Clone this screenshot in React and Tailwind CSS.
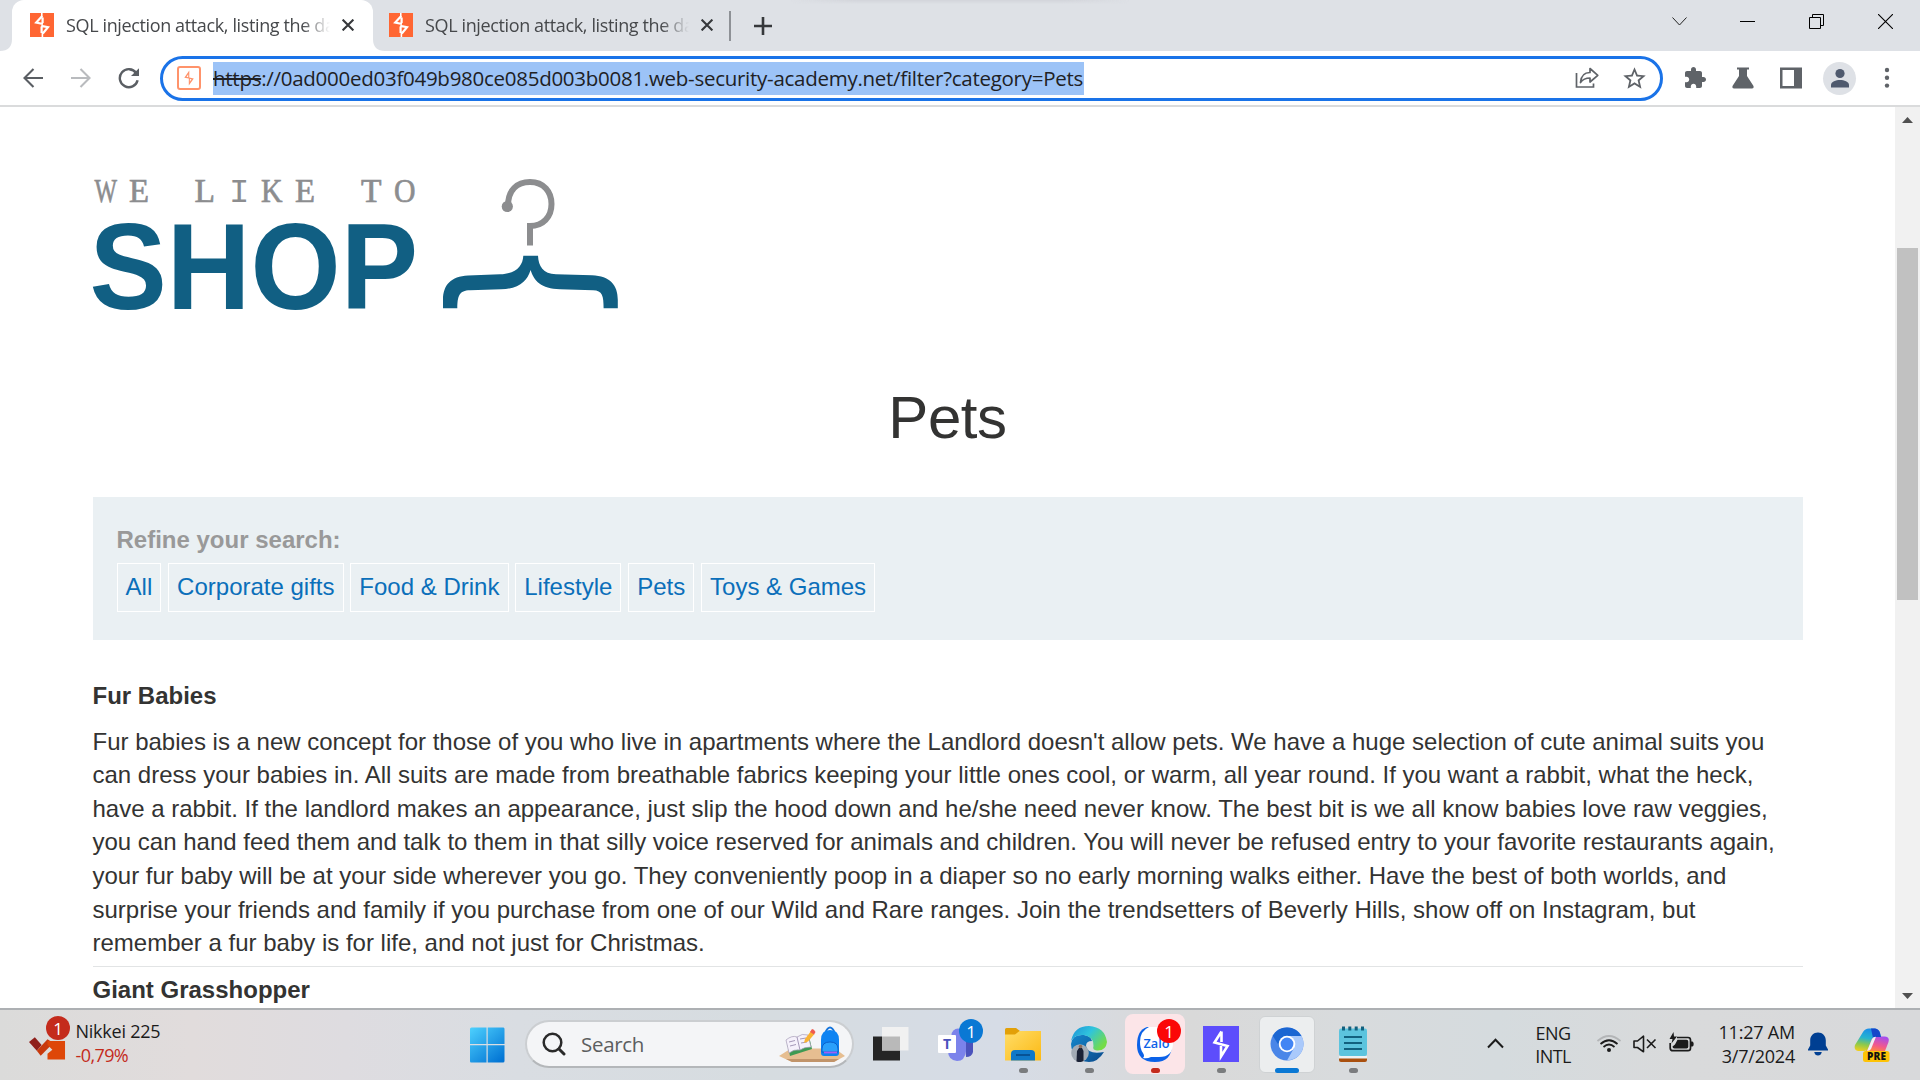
const UI = "font-['Open_Sans','Noto_Sans',sans-serif]";

const tabs = [
  { title: "SQL injection attack, listing the da", active: true },
  { title: "SQL injection attack, listing the da", active: false },
];

const categories = ["All", "Corporate gifts", "Food & Drink", "Lifestyle", "Pets", "Toys & Games"];

const furBabies = [
  "Fur babies is a new concept for those of you who live in apartments where the Landlord doesn't allow pets. We have a huge selection of cute animal suits you",
  "can dress your babies in. All suits are made from breathable fabrics keeping your little ones cool, or warm, all year round. If you want a rabbit, what the heck,",
  "have a rabbit. If the landlord makes an appearance, just slip the hood down and he/she need never know. The best bit is we all know babies love raw veggies,",
  "you can hand feed them and talk to them in that silly voice reserved for animals and children. You will never be refused entry to your favorite restaurants again,",
  "your fur baby will be at your side wherever you go. They conveniently poop in a diaper so no early morning walks either. Have the best of both worlds, and",
  "surprise your friends and family if you purchase from one of our Wild and Rare ranges. Join the trendsetters of Beverly Hills, show off on Instagram, but",
  "remember a fur baby is for life, and not just for Christmas.",
];

function Favicon() {
  return (
    <span className="h-6 w-6 shrink-0 bg-[#ff6633]">
      <svg className="block h-6 w-6" viewBox="0 0 24 24" fill="none" stroke="#fff" strokeWidth="2.2">
        <path d="M11.8 0 V4" strokeWidth="1.6" />
        <path d="M12.2 3 L6.2 9.6 L13 11 M12.6 4.5 L12.6 10" />
        <path d="M12.8 20.5 L18 14.2 L11.2 12.8 M11.6 20 L11.6 13.5" />
        <path d="M12.4 20 V24" strokeWidth="1.6" />
      </svg>
    </span>
  );
}

function CloseX() {
  return (
    <svg className="h-3 w-3 shrink-0" viewBox="0 0 12 12" stroke="#36383b" strokeWidth="2.1">
      <path d="M0.6 0.6 L11.4 11.4 M11.4 0.6 L0.6 11.4" />
    </svg>
  );
}

function Tab({ title, active }) {
  const inner = (
    <>
      <Favicon />
      <span className={`ml-[12px] w-[264px] whitespace-nowrap text-[18px] leading-[28px] tracking-[-0.37px] text-[#46484b] [mask-image:linear-gradient(to_right,#000_236px,transparent_264px)] ${UI}`}>
        {title}
      </span>
      <span className="ml-[12px]"><CloseX /></span>
    </>
  );
  return active ? (
    <div className="flex h-[51px] w-[361px] items-center rounded-t-[12px] bg-white pb-px pl-[18px]">{inner}</div>
  ) : (
    <div className="flex h-[51px] w-[356px] items-center pb-px pl-[16px]">{inner}</div>
  );
}

function TabStrip() {
  return (
    <div className="flex h-[51px] bg-[#dee1e6]">
      <svg className="h-[51px] w-3" viewBox="0 0 12 51"><path d="M0 51 Q12 51 12 39 V51 Z" fill="#fff" /></svg>
      <Tab {...tabs[0]} />
      <svg className="-mr-3 h-[51px] w-3" viewBox="0 0 12 51"><path d="M12 51 Q0 51 0 39 V51 Z" fill="#fff" /></svg>
      <Tab {...tabs[1]} />
      <div className="mt-[11px] h-[30px] w-[1.5px] bg-[#8e9196]" />
      <svg className="ml-[23px] mt-[17px] h-[18px] w-[18px]" viewBox="0 0 18 18" stroke="#36383b" strokeWidth="2.6"><path d="M9 0 V18 M0 9 H18" /></svg>
      <div className="ml-[18px] h-[4px] w-[340px] bg-[linear-gradient(to_right,transparent,#d2d4da_20%,#d2d4da_80%,transparent)] [mask-image:linear-gradient(#000,transparent)]" />
      <div className="ml-auto flex pt-[14px] pr-[27px]">
        <svg className="h-[15px] w-[15px]" viewBox="0 0 15 15" fill="none" stroke="#222"><path d="M0.5 3.5 L7.5 11 L14.5 3.5" /></svg>
        <svg className="ml-[53px] h-[15px] w-[15px]" viewBox="0 0 15 15" stroke="#000"><path d="M0 7.5 H15" /></svg>
        <svg className="ml-[54px] h-[15px] w-[15px]" viewBox="0 0 15 15" fill="none" stroke="#000"><path d="M0.5 3.5 H11.5 V14.5 H0.5 Z M3.5 3.5 V0.5 H14.5 V11.5 H11.5" /></svg>
        <svg className="ml-[54px] h-[15px] w-[15px]" viewBox="0 0 15 15" stroke="#000" strokeWidth="1.1"><path d="M0 0 L15 15 M15 0 L0 15" /></svg>
      </div>
    </div>
  );
}

function Toolbar() {
  return (
    <div className="flex h-[56px] items-center border-b-2 border-[#dadbdc] bg-white pl-[22.500px] text-[#5f6368]">
      <svg className="h-5 w-5" viewBox="0 0 20 20" fill="none" stroke="#5a5e63" strokeWidth="2.1"><path d="M20 10 H1.5 M10.5 1 L1.5 10 L10.5 19" /></svg>
      <svg className="ml-[28px] h-5 w-5" viewBox="0 0 20 20" fill="none" stroke="#b9bbbe" strokeWidth="2.1"><path d="M0 10 H18.5 M9.5 1 L18.5 10 L9.5 19" /></svg>
      <svg className="ml-[27.500px] h-[22px] w-[22px]" viewBox="0 0 22 22" fill="none" stroke="#5a5e63" strokeWidth="2.4"><path d="M18.2 6 A9 9 0 1 0 19.6 13.2" /><path d="M21 1.2 V9 H13 Z" fill="#5a5e63" stroke="none" /></svg>
      <div className="ml-[20px] flex h-[45px] w-[1503px] items-center rounded-full border-[3px] border-[#1a73e8] pl-[14px] pr-[12px]">
        <svg className="h-6 w-6" viewBox="0 0 24 24" fill="none">
          <rect x="1" y="1" width="22" height="22" rx="2" stroke="#ff936b" strokeWidth="2" />
          <path d="M12.3 4.5 L7.3 11.8 L11.8 12.6 L11.8 19.5 L16.8 12.4 L12.3 11.4 Z" fill="#ff936b" />
          <path d="M11.2 8.4 L9.6 10.8 L11.2 11.2 Z M12.9 15.6 L14.5 13.2 L12.9 12.9 Z" fill="#fff" />
        </svg>
        <span className={`ml-[12px] h-[33px] w-[871px] whitespace-nowrap bg-[#9cc3f7] text-[20.500px] leading-[33px] tracking-[-0.270px] text-[#202124] ${UI}`}>
          <s className="decoration-[1.5px]">https</s>://0ad000ed03f049b980ce085d003b0081.web-security-academy.net/filter?category=Pets
        </span>
        <svg className="ml-auto h-6 w-6" viewBox="0 0 24 24" fill="none" stroke="#5f6368" strokeWidth="1.7">
          <path d="M1.5 7 V21 H18.5 V17.5" />
          <path d="M5.5 16.5 C6 10 9.5 6.5 15 6.5 V2.5 L22.8 9.3 L15 16 V12 C11 12 8 13 5.5 16.5 Z" strokeLinejoin="round" />
        </svg>
        <svg className="ml-[22px] h-[27px] w-[27px]" viewBox="0 0 24 24" fill="#5f6368"><path d="M22 9.24l-7.19-.62L12 2 9.19 8.63 2 9.24l5.46 4.73L5.82 21 12 17.27 18.18 21l-1.63-7.03L22 9.24zM12 15.4l-3.76 2.27 1-4.28-3.32-2.88 4.38-.38L12 6.1l1.71 4.04 4.38.38-3.32 2.88 1 4.28L12 15.4z" /></svg>
      </div>
      <svg className="ml-[20px] h-6 w-6" viewBox="0 0 24 24" fill="#5f6368"><path d="M20.5 11H19V7c0-1.1-.9-2-2-2h-4V3.500C13 2.120 11.880 1 10.500 1S8 2.120 8 3.500V5H4c-1.100 0-1.990.9-1.990 2v3.800H3.500c1.490 0 2.700 1.210 2.700 2.700s-1.210 2.700-2.700 2.700H2V20c0 1.100.9 2 2 2h3.800v-1.500c0-1.490 1.210-2.700 2.700-2.700s2.700 1.210 2.700 2.700V22H17c1.100 0 2-.9 2-2v-4h1.500c1.380 0 2.500-1.120 2.500-2.500S21.880 11 20.500 11z" /></svg>
      <svg className="ml-[25px] h-[22px] w-[22px]" viewBox="0 0 22 22" fill="#5f6368"><path d="M5 0.500 H17 V2.500 H15 V9 L21.500 19 Q22 21.500 20 21.500 H2 Q0 21.500 0.500 19 L7 9 V2.500 H5 Z" /></svg>
      <svg className="ml-[26px] h-[22px] w-[22px]" viewBox="0 0 22 22"><path fillRule="evenodd" fill="#5f6368" d="M0 0.500 H22 V21.500 H0 Z M2.500 3 V19 H14 V3 Z" /></svg>
      <span className="ml-[21px] flex h-[33px] w-[33px] items-center justify-center rounded-full bg-[#dee1e6]">
        <svg className="h-[20px] w-[20px]" viewBox="0 0 20 20" fill="#4f5a6e"><circle cx="10" cy="5.500" r="4.600" /><path d="M1 19.500 V17 C1 13.500 6 12 10 12 S19 13.500 19 17 V19.500 Z" /></svg>
      </span>
      <svg className="ml-[28px] h-[22px] w-[6px]" viewBox="0 0 6 22" fill="#5f6368"><circle cx="3" cy="3" r="2.200" /><circle cx="3" cy="10.800" r="2.200" /><circle cx="3" cy="18.600" r="2.200" /></svg>
    </div>
  );
}

function Logo() {
  const serif = "Liberation Serif";
  const letters = [
    ["W", 94.5, 22.5], ["E", 129, 20], [" ", 160, 10], ["L", 194.5, 20.5], ["I", 229, 20.4, "Liberation Mono"], ["K", 261, 21.5], ["E", 295, 20], [" ", 330, 10], ["T", 361, 20.5], ["O", 394, 21.5],
  ];
  return (
    <svg className="ml-[0.5px] block h-[140px] w-[530px] overflow-visible" viewBox="93 175 530 140">
      <text y="202" fontSize="34" fill="#8c8d8f" stroke="#8c8d8f" strokeWidth="0.7">
        {letters.map(([c, x, w, family = serif], i) => (
          <tspan key={i} x={x} textLength={w} lengthAdjust="spacingAndGlyphs" fontFamily={family} strokeWidth={family === serif ? 0.7 : 0}>{c}</tspan>
        ))}
      </text>
      <text x="89.500" y="309" fontSize="121.500" fontWeight="700" fontFamily="Liberation Sans" fill="#115f83" textLength="328.500" lengthAdjust="spacingAndGlyphs">SHOP</text>
      <path d="M508 206 C508 190 517 182 530 182 C544 182 551.500 192 551.500 204 C551.500 217 543 226 530 226 V245.500 M530 232 V223" fill="none" stroke="#8c8d8f" strokeWidth="6" />
      <circle cx="507.300" cy="206.500" r="5.600" fill="#8c8d8f" />
      <path fill="#115f83" d="M523.300 255.700 H538 C538.500 266 543 273.800 556 274.300 L592 275.300 C610 276 617.800 285 617.800 300 V308.300 H603.600 C603.600 296 602.500 290.600 593 290.300 L560 289.300 C541 288.600 534 281 530.600 270 C527 281 520 288.600 501 289.300 L470 290.300 C459 290.600 457.500 296 457.300 308.300 H443 V300 C443 285 451 276.500 468 275.600 L500 274.300 C516 273.800 522.800 266 523.300 255.700 Z" />
    </svg>
  );
}

function Page() {
  return (
    <div className="flex h-[901px] overflow-hidden bg-white font-['Liberation_Sans',Arial,sans-serif] text-[24px] leading-[33.6px] text-[#333332]">
      <main className="flex w-[1895px] flex-col px-[92.5px] pt-[68px]">
        <Logo />
        <h1 className="mt-[63px] text-center text-[60px] leading-[80px] tracking-[-0.400px]">Pets</h1>
        <section className="mt-[39px] h-[143px] bg-[#eaf0f3] pl-[24px] pt-[26px]">
          <p className="font-bold leading-[34px] text-[#999]">Refine your search:</p>
          <div className="mt-[6px] flex gap-[6.67px]">
            {categories.map((c) => (
              <a key={c} className="h-[49px] whitespace-nowrap border border-white px-[8.1px] leading-[46px] text-[#0b6fba]">{c}</a>
            ))}
          </div>
        </section>
        <h3 className="mt-[39px] font-bold">Fur Babies</h3>
        <div className="mt-[12px] whitespace-nowrap">
          {furBabies.map((l) => <p key={l}>{l}</p>)}
        </div>
        <div className="mt-[6px] h-px shrink-0 bg-[#e2e4e5]" />
        <h3 className="mt-[6px] font-bold">Giant Grasshopper</h3>
      </main>
      <div className="flex w-[25px] flex-col items-center bg-[#f1f1f1]">
        <svg className="mt-[10px] h-[6px] w-[11px]" viewBox="0 0 11 6"><path d="M0 6 L5.500 0 L11 6 Z" fill="#505050" /></svg>
        <div className="mt-[125px] h-[352px] w-[21px] bg-[#c1c1c1]" />
        <svg className="mb-[9px] mt-auto h-[6px] w-[11px]" viewBox="0 0 11 6"><path d="M0 0 L5.500 6 L11 0 Z" fill="#505050" /></svg>
      </div>
    </div>
  );
}

function Badge({ className }) {
  return <span className={`absolute flex h-6 w-6 items-center justify-center rounded-full text-[17px] leading-none text-white ${className}`}>1</span>;
}

function TaskItem({ children, dot = "w-[9px] bg-[#7a7c7e]", tile = "" }) {
  return (
    <div className="flex h-[70px] w-[66px] flex-col items-center">
      <div className={`relative mt-[4px] flex h-[60px] w-[60px] items-center justify-center ${tile}`}>{children}</div>
      <div className={`relative -mt-[6px] h-[5px] rounded-full ${dot}`} />
    </div>
  );
}

function Taskbar() {
  return (
    <div className={`flex h-[72px] border-t-2 border-[#adb0b3] bg-[linear-gradient(to_right,#dbdbda_0,#e1dcdc_10%,#dedce0_18%,#d9dde2_27%,#d6dce0_40%,#d6dce6_52%,#d9d9d9_62%,#d8dbdd_70%,#d5dbde_78%,#d9dadb_88%,#d8d9db_100%)] text-[#1b1b1b] ${UI}`}>
      <div className="relative ml-[29px] flex w-[440px] pt-[9px]">
        <svg className="mt-[8px] h-[34px] w-[37px]" viewBox="0 0 38 34">
          <path d="M0 15 L6 10 L13 18 L8 24 Z" fill="#8f1f1b" />
          <path d="M8 24 L19 12 L25 16 L12 29 Z" fill="#c8390c" />
          <path d="M19 27 L24 23 L19 18 V14 L37 14 V33 H19 Z" fill="#de4708" />
        </svg>
        <Badge className="left-[17px] top-[6px] bg-[#c42b1c]" />
        <div className="ml-[9.500px] whitespace-nowrap text-[18px] leading-[24px] tracking-[-0.240px]">
          <p>Nikkei 225</p>
          <p className="text-[#c42b1c] tracking-[-0.600px]">-0,79%</p>
        </div>
      </div>
      <svg className="mt-[17px] h-[36px] w-[36px]" viewBox="0 0 36 36">
        <defs><linearGradient id="win" gradientUnits="userSpaceOnUse" x1="0" y1="0" x2="30" y2="36"><stop stopColor="#4fd3ff" /><stop offset="1" stopColor="#0274d4" /></linearGradient></defs>
        <path fill="url(#win)" d="M1 2 Q1 0.500 2.500 0.500 H17.500 V17 H1 Z M18.700 0.500 H34.500 Q35.500 0.500 35.500 2 V17 H18.700 Z M1 18.300 H17.500 V35.500 H2 Q1 35.500 1 34 Z M18.700 18.300 H35.500 V34 Q35.500 35.500 34 35.500 H18.700 Z" />
      </svg>
      <div className="ml-[20px] mt-[10px] flex h-[48px] w-[329px] items-center rounded-full border-2 border-[#cbced1] border-b-[#b4b7ba] bg-[#f4f5f7] pl-[15px]">
        <svg className="h-[24px] w-[24px]" viewBox="0 0 24 24" fill="none" stroke="#2a2a2a" strokeWidth="2.500" strokeLinecap="round"><circle cx="10.500" cy="10.500" r="8.800" /><path d="M17 17 L22 22" strokeWidth="3" /></svg>
        <span className="ml-[15px] text-[20.500px] tracking-[-0.300px] text-[#5c5e60]">Search</span>
        <svg className="ml-auto mr-[6px] h-[38px] w-[68px]" viewBox="0 0 68 38">
          <path d="M1 31 L13 23.500 H57 L67 31 L56 37 H14 Z" fill="#e6be91" />
          <path d="M8 34 H61 L56 37 H14 Z" fill="#c1946a" />
          <path d="M9 18 L31 11 L34 24 L12 31 Z" fill="#3d9a52" />
          <path d="M8 15 Q14 10 19 12 Q24 8 30 10 L33 22 Q26 22 22 25 Q16 24 11 28 Z" fill="#f5f1fb" stroke="#a59bb6" strokeWidth="0.700" />
          <path d="M19 12 L22 25 M11 17 L17 15.500 M12 21 L18 19.500 M22 14 L28 13 M23 18 L29 17" stroke="#9b8fb0" strokeWidth="0.900" />
          <path d="M26 18 L27 14 L33 6 L36.500 9 L30 16.500 Z" fill="#f9b233" />
          <path d="M32 7 L34 4 Q36 4 37.500 7 L36 9.500 Z" fill="#ef5a50" />
          <path d="M47 8 Q52 -3 57 8" fill="none" stroke="#1474dc" strokeWidth="1.800" />
          <path d="M43 15 Q43 5 52 5 Q61 5 61 15 V28 Q61 31 58 31 H46 Q43 31 43 28 Z" fill="#0d83f2" />
          <path d="M44 27 V24 Q44 17 52 17 Q60 17 60 24 V27 Z" fill="#2aa0fb" stroke="#0656c2" strokeWidth="0.800" />
          <path d="M46 27.500 H59" stroke="#a35ef2" strokeWidth="1.800" />
        </svg>
      </div>
      <div className="ml-[4px] flex">
        <TaskItem dot="w-0">
          <svg className="h-9 w-9" viewBox="0 0 36 36"><path d="M0 10.500 H27 V34.500 H0 Z" fill="#252525" /><path d="M9 1 H35.500 V24.500 H9 Z" fill="#f1f1f1" /><path d="M9 10.500 H27 V24.500 H9 Z" fill="#b9b9b9" /></svg>
        </TaskItem>
        <TaskItem dot="w-0">
          <svg className="ml-[2px] h-[42px] w-[42px]" viewBox="0 0 42 42">
            <circle cx="21" cy="12" r="6.500" fill="#7b83eb" />
            <path d="M28 16 H36 V29 Q35 34 29 34 Z" fill="#4b53bc" />
            <path d="M11 15 H29 V28 Q28 38 20 38 Q11 37 11 28 Z" fill="#7b83eb" />
            <rect x="1" y="12" width="18" height="18" rx="1" fill="#fff" />
            <text x="10" y="26" textAnchor="middle" fontSize="14" fontWeight="700" fill="#4b53bc">T</text>
          </svg>
          <Badge className="left-[32px] top-[5px] bg-[#0a78d4]" />
        </TaskItem>
        <TaskItem>
          <svg className="h-9 w-9" viewBox="0 0 36 36">
            <defs><linearGradient id="fold" x1="0" y1="0" x2="1" y2="1"><stop stopColor="#ffdd68" /><stop offset="1" stopColor="#fcb914" /></linearGradient></defs>
            <path d="M0 3.500 Q0 2 1.500 2 H11 L15 5 V10 H0 Z" fill="#e2a008" />
            <path d="M0 8.500 H10 L14.500 5 H36 V34.500 H0 Z" fill="url(#fold)" />
            <path d="M6 34.500 V28 Q6 24 10 24 H26 Q30 24 30 28 V34.500 Z" fill="#0f78c8" />
            <path d="M11 29 H25" stroke="#074f8f" strokeWidth="1.800" />
          </svg>
        </TaskItem>
        <TaskItem>
          <svg className="h-9 w-9" viewBox="0 0 36 36">
            <defs>
              <linearGradient id="ea" x1="0" y1="0" x2="1" y2="0.600"><stop stopColor="#1b8fd8" /><stop offset="0.500" stopColor="#2fc4dd" /><stop offset="1" stopColor="#74dc48" /></linearGradient>
              <linearGradient id="eb" x1="0" y1="0" x2="1" y2="1"><stop stopColor="#1487cd" /><stop offset="1" stopColor="#0b4a8b" /></linearGradient>
            </defs>
            <path d="M0 18 Q1 8 13 9 Q20 10 21 15 Q15 15 15 20 Q17 29 33 26 Q27 36 18 36 Q1 35 0 18 Z" fill="url(#eb)" />
            <path d="M0 15 Q3 0 18 0 Q34 1 36 16 Q35 25 26 24.500 Q21 24 22.500 20 Q23 11 13 9 Q4 8 0 15 Z" fill="url(#ea)" />
            <circle cx="9" cy="27" r="8.800" fill="#a3abb5" />
            <path d="M5.500 35.500 L6 25 L8 22 H11 L12.500 25 V35 Q9 37 5.500 35.500 Z" fill="#1b2236" /><circle cx="9.500" cy="20.500" r="1.800" fill="#8b6b5c" />
          </svg>
        </TaskItem>
        <TaskItem tile="rounded-[8px] bg-[#fce5e8]" dot="w-[9px] bg-[#c42b1c]">
          <svg className="h-9 w-9" viewBox="0 0 36 36">
            <path d="M10 1 H27 Q35 3 35 18 Q35 36 18 36 Q0 36 0 19 Q0 4 10 1 Z" fill="#0b62e8" />
            <path d="M12 1 H27 Q36 3 36 17 Q36 31 22 31 H14 Q10 33 6 32 Q8 30 6 27 Q3 23 3 16 Q3 5 12 1 Z" fill="#fff" />
            <text x="19.500" y="21.500" textAnchor="middle" fontSize="13" fontWeight="600" fill="#0b62e8" textLength="26" lengthAdjust="spacingAndGlyphs">Zalo</text>
          </svg>
          <Badge className="left-[32px] top-[5px] bg-[#fb0707]" />
        </TaskItem>
        <TaskItem>
          <span className="flex h-9 w-9 items-center justify-center bg-[#5d4dfc]">
            <svg className="h-9 w-9" viewBox="0 0 36 36" fill="none" stroke="#fff" strokeWidth="2.600"><path d="M18.500 5.500 V16 M18.500 5.500 L11.500 16.500 L24.500 20 L18 30.500 V20" /></svg>
          </span>
        </TaskItem>
        <TaskItem dot="w-6 bg-[#0a78d4]">
          <span className="flex h-[57px] w-[56px] items-center justify-center rounded-[6px] border border-[#cfd2d4] bg-[#eceeef]">
            <svg className="h-[34px] w-[34px]" viewBox="0 0 34 34">
              <circle cx="17" cy="17" r="16.500" fill="#4a86e8" />
              <path d="M17 9 H31.500 A16.500 16.500 0 0 1 17 33.500 L24 21 Z" fill="#a9c9fb" />
              <path d="M2.700 8.800 A16.500 16.500 0 0 1 31.500 9 H17 L9.500 19.500 Z" fill="#1b66d2" />
              <circle cx="17" cy="17" r="8.300" fill="#fff" /><circle cx="17" cy="17" r="6.400" fill="#4285f4" />
            </svg>
          </span>
        </TaskItem>
        <TaskItem>
          <svg className="h-9 w-7" viewBox="0 0 28 36">
            <rect x="0" y="2.500" width="28" height="27.500" rx="2" fill="#5cc4de" />
            <path d="M0 30 H28 V33 H0 Z" fill="#eef2f3" /><path d="M0 32.500 H28 V34 Q28 36 26 36 H2 Q0 36 0 34 Z" fill="#a9500f" />
            <path d="M5 11 H23 M5 17 H23 M5 23 H23" stroke="#12617f" strokeWidth="2" />
            <path d="M4.500 0.500 V4.500 M10.800 0.500 V4.500 M17.200 0.500 V4.500 M23.500 0.500 V4.500" stroke="#12617f" strokeWidth="3" />
          </svg>
        </TaskItem>
      </div>
      <div className="ml-auto flex text-[18px] leading-[23px]">
        <svg className="mt-[28px] h-[11px] w-[17px]" viewBox="0 0 17 11" fill="none" stroke="#1b1b1b" strokeWidth="2"><path d="M1 9.500 L8.500 1.800 L16 9.500" /></svg>
        <div className="ml-[28px] mt-[12px] w-[42px] text-center tracking-[-0.600px]"><p>ENG</p><p>INTL</p></div>
        <svg className="ml-[23px] mt-[25px] h-[18px] w-[24px]" viewBox="0 0 24 18" fill="none" stroke="#1b1b1b" strokeWidth="1.700">
          <path d="M0.500 6 Q12 -4 23.500 6" stroke="#b3b5b7" /><path d="M3.500 9 Q12 1.500 20.500 9 M6.500 12 Q12 7 17.500 12" /><circle cx="12" cy="15" r="2" fill="#1b1b1b" stroke="none" />
        </svg>
        <svg className="ml-[12px] mt-[25px] h-[18px] w-[24px]" viewBox="0 0 24 18" fill="none" stroke="#1b1b1b" strokeWidth="1.600"><path d="M1 6 H4.500 L10.500 1.200 V16.800 L4.500 12.500 H1 Z M14 4.500 L22.500 13 M22.500 4.500 L14 13" strokeLinejoin="round" /></svg>
        <svg className="ml-[12px] mt-[22px] h-[20px] w-[25px]" viewBox="0 0 25 20" fill="none">
          <path d="M8 5.500 H19 Q21.500 5.500 21.500 8 V16 Q21.500 18.700 19 18.700 H4 Q1.200 18.700 1.200 16 V11" stroke="#1b1b1b" strokeWidth="1.700" />
          <path d="M8.500 7.800 H17.500 Q19.300 7.800 19.300 9.500 V14.800 Q19.300 16.500 17.500 16.500 H5.500 Q3.500 16.500 3.500 14.500 L6 12.500 Z" fill="#1b1b1b" />
          <path d="M22 9.500 H23.500 Q24.700 10 24.700 12 T23.500 14.500 H22 Z" fill="#1b1b1b" /><path d="M4.500 0 L0.500 7 H3.500 L2.500 11.500 L8 4.500 H5 Z" fill="#1b1b1b" />
        </svg>
        <div className="mt-[10px] w-[101px] whitespace-nowrap text-right leading-[24px] tracking-[-0.200px]"><p>11:27 AM</p><p>3/7/2024</p></div>
        <svg className="ml-[12px] mt-[22px] h-[24px] w-[22px]" viewBox="0 0 22 24" fill="#003f92"><path d="M11 0.500 C15.500 0.500 18.800 4 18.800 8.500 V13.500 L21 17.500 V18.500 H1 V17.500 L3.200 13.500 V8.500 C3.200 4 6.500 0.500 11 0.500 Z M7.200 20 H14.800 Q14 23.500 11 23.500 T7.200 20 Z" /></svg>
        <svg className="ml-[25px] mr-[30px] mt-[17px] h-[36px] w-[36px]" viewBox="0 0 36 36">
          <defs>
            <linearGradient id="c1" x1="0.400" y1="0" x2="0.200" y2="1"><stop stopColor="#1b8fe8" /><stop offset="0.400" stopColor="#26b4cf" /><stop offset="0.700" stopColor="#8ec94b" /><stop offset="1" stopColor="#f2cf1d" /></linearGradient>
            <linearGradient id="c2" x1="0.700" y1="0" x2="0.300" y2="1"><stop stopColor="#a44df0" /><stop offset="0.600" stopColor="#f2598c" /><stop offset="1" stopColor="#ff8a3d" /></linearGradient>
          </defs>
          <path d="M17 9.500 H31 Q36 10 34.500 15 L31 24 H12 Z" fill="url(#c2)" />
          <path d="M9 5 Q11 1.500 15 1.500 H21 Q25 2 26 6 L27 10 H22 Q18 10 17 14 L14 22 Q13 24 10 24 H4 Q-0.500 23 1 18 Z" fill="url(#c1)" />
          <path d="M17 1.500 H21 Q25 2 26 6 L27 10 H22 Q20 10 19 11 Z" fill="#1546c9" />
          <path d="M18 12 Q19 9.800 22 9.800 L17 22 Q16 24 13 24 Z" fill="#f1f1f4" />
          <rect x="9" y="24" width="26.500" height="11" rx="2.500" fill="#fdc307" />
          <text x="22.500" y="33" textAnchor="middle" fontSize="10" fontWeight="800" fill="#111" textLength="19">PRE</text>
        </svg>
      </div>
    </div>
  );
}

export default function App() {
  return (
    <div className="flex h-[1080px] w-[1920px] flex-col overflow-hidden bg-white">
      <TabStrip />
      <Toolbar />
      <Page />
      <Taskbar />
    </div>
  );
}
